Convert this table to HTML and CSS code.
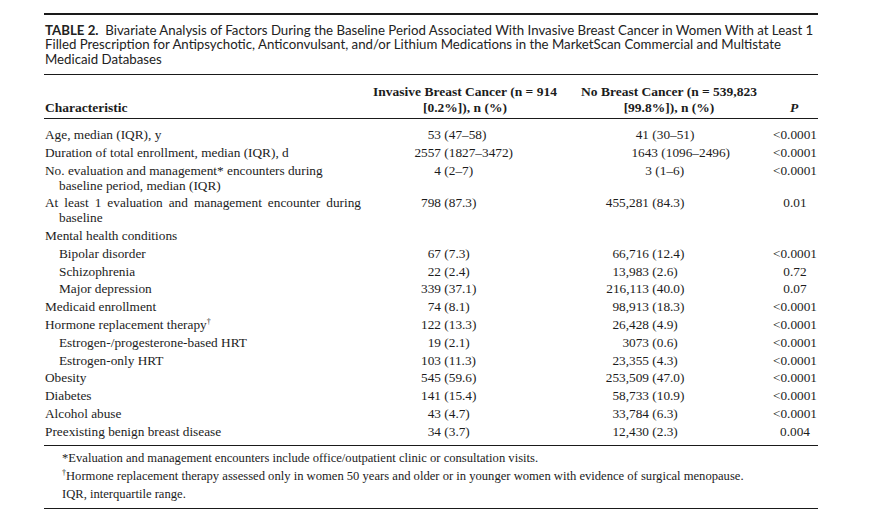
FILE: index.html
```html
<!DOCTYPE html>
<html lang="en">
<head>
<meta charset="utf-8">
<title>Table 2</title>
<link rel="stylesheet" href="styles.css">
</head>
<body>
<div class="page">
  <div class="tbl">
    <div class="caption"><b>TABLE 2.</b>&nbsp; Bivariate Analysis of Factors During the Baseline Period Associated With Invasive Breast Cancer in Women With at Least 1<br>Filled Prescription for Antipsychotic, Anticonvulsant, and/or Lithium Medications in the MarketScan Commercial and Multistate<br>Medicaid Databases</div>
    <table class="data">
      <colgroup>
        <col class="c1"><col class="c2"><col class="c3"><col class="c4">
      </colgroup>
      <thead>
        <tr>
          <th class="h-char">Characteristic</th>
          <th class="h-inv">Invasive Breast Cancer (n = 914<br>[0.2%]), n (%)</th>
          <th class="h-no">No Breast Cancer (n = 539,823<br>[99.8%]), n (%)</th>
          <th class="h-p"><i>P</i></th>
        </tr>
      </thead>
      <tbody>
        <tr class="first"><td>Age, median (IQR), y</td><td><span class="n2">53</span> (47–58)</td><td><span class="n3">41</span> (30–51)</td><td class="p">&lt;0.0001</td></tr>
        <tr><td>Duration of total enrollment, median (IQR), d</td><td><span class="n2">2557</span> (1827–3472)</td><td><span class="n3 w">1643</span> (1096–2496)</td><td class="p">&lt;0.0001</td></tr>
        <tr><td class="wrap">No. evaluation and management* encounters during<br>baseline period, median (IQR)</td><td><span class="n2">4</span> (2–7)</td><td><span class="n3 s">3</span> (1–6)</td><td class="p">&lt;0.0001</td></tr>
        <tr><td class="wrap"><span class="just">At least 1 evaluation and management encounter during</span>baseline</td><td><span class="n2">798</span> (87.3)</td><td><span class="n3">455,281</span> (84.3)</td><td class="p">0.01</td></tr>
        <tr><td>Mental health conditions</td><td></td><td></td><td></td></tr>
        <tr><td class="sub">Bipolar disorder</td><td><span class="n2">67</span> (7.3)</td><td><span class="n3">66,716</span> (12.4)</td><td class="p">&lt;0.0001</td></tr>
        <tr><td class="sub">Schizophrenia</td><td><span class="n2">22</span> (2.4)</td><td><span class="n3">13,983</span> (2.6)</td><td class="p">0.72</td></tr>
        <tr><td class="sub">Major depression</td><td><span class="n2">339</span> (37.1)</td><td><span class="n3">216,113</span> (40.0)</td><td class="p">0.07</td></tr>
        <tr><td>Medicaid enrollment</td><td><span class="n2">74</span> (8.1)</td><td><span class="n3">98,913</span> (18.3)</td><td class="p">&lt;0.0001</td></tr>
        <tr><td>Hormone replacement therapy<sup>†</sup></td><td><span class="n2">122</span> (13.3)</td><td><span class="n3">26,428</span> (4.9)</td><td class="p">&lt;0.0001</td></tr>
        <tr><td class="sub">Estrogen-/progesterone-based HRT</td><td><span class="n2">19</span> (2.1)</td><td><span class="n3">3073</span> (0.6)</td><td class="p">&lt;0.0001</td></tr>
        <tr><td class="sub">Estrogen-only HRT</td><td><span class="n2">103</span> (11.3)</td><td><span class="n3">23,355</span> (4.3)</td><td class="p">&lt;0.0001</td></tr>
        <tr><td>Obesity</td><td><span class="n2">545</span> (59.6)</td><td><span class="n3">253,509</span> (47.0)</td><td class="p">&lt;0.0001</td></tr>
        <tr><td>Diabetes</td><td><span class="n2">141</span> (15.4)</td><td><span class="n3">58,733</span> (10.9)</td><td class="p">&lt;0.0001</td></tr>
        <tr><td>Alcohol abuse</td><td><span class="n2">43</span> (4.7)</td><td><span class="n3">33,784</span> (6.3)</td><td class="p">&lt;0.0001</td></tr>
        <tr class="last"><td>Preexisting benign breast disease</td><td><span class="n2">34</span> (3.7)</td><td><span class="n3">12,430</span> (2.3)</td><td class="p">0.004</td></tr>
      </tbody>
    </table>
    <div class="notes">
      <p>*Evaluation and management encounters include office/outpatient clinic or consultation visits.</p>
      <p><sup>†</sup>Hormone replacement therapy assessed only in women 50 years and older or in younger women with evidence of surgical menopause.</p>
      <p>IQR, interquartile range.</p>
    </div>
  </div>
</div>
</body>
</html>
```

FILE: styles.css
```css
html, body {
  margin: 0;
  padding: 0;
  background: #ffffff;
}

.page {
  padding: 13px 0 0 44px;
}

.tbl {
  width: 774px;
  border-top: 2px solid #1a1a1a;
  border-bottom: 1px solid #1a1a1a;
  color: #1c1c1c;
}

.caption {
  font-family: "Lato", "Liberation Sans", sans-serif;
  font-size: 13.25px;
  line-height: 14.5px;
  padding: 7.75px 0 7.75px 1px;
  border-bottom: 1px solid #1a1a1a;
  color: #222;
  white-space: nowrap;
}

.caption b {
  font-weight: 700;
}

.data {
  width: 774px;
  border-collapse: collapse;
  table-layout: fixed;
  font-family: "Liberation Serif", "Times New Roman", serif;
  font-size: 13.3px;
}

.c1 { width: 328px; }
.c2 { width: 186px; }
.c3 { width: 212px; }
.c4 { width: 48px; }

.data th {
  font-weight: 700;
  font-size: 13.5px;
  line-height: 16px;
  padding: 9px 0 2px 0;
  vertical-align: bottom;
  border-bottom: 1px solid #1a1a1a;
  white-space: nowrap;
}

.data th.h-char {
  text-align: left;
  padding-left: 1px;
}

.data th.h-inv {
  text-align: center;
  padding-right: 0;
}

.data th.h-no {
  text-align: center;
  padding-left: 10px;
}

.data th.h-p {
  text-align: center;
  padding-left: 0;
}

.data td {
  line-height: 15px;
  padding: 1.4px 0;
  vertical-align: top;
  white-space: nowrap;
}

.data td:first-child {
  padding-left: 1px;
}

.data tr.first td {
  padding-top: 8px;
}

.data tr.last td {
  padding-bottom: 6px;
}

.data td.sub {
  padding-left: 15px;
}

.data td.wrap {
  padding-left: 15px;
  text-indent: -14px;
}

.just {
  display: block;
  width: 302px;
  text-align: justify;
  text-align-last: justify;
  white-space: normal;
}

.n2 {
  display: inline-block;
  width: 69px;
  text-align: right;
}

.n3 {
  display: inline-block;
  width: 91px;
  text-align: right;
}

.n3.w { width: 100px; }
.n3.s { width: 94px; }

.data td.p {
  text-align: center;
  padding-left: 2px;
}

sup {
  font-size: 8px;
  line-height: 0;
  vertical-align: 5px;
}

.notes {
  border-top: 1px solid #1a1a1a;
  padding: 3.5px 0 5px 18px;
  font-family: "Liberation Serif", "Times New Roman", serif;
  font-size: 12.6px;
  line-height: 18px;
}

.notes p {
  margin: 0;
  white-space: nowrap;
}
```
